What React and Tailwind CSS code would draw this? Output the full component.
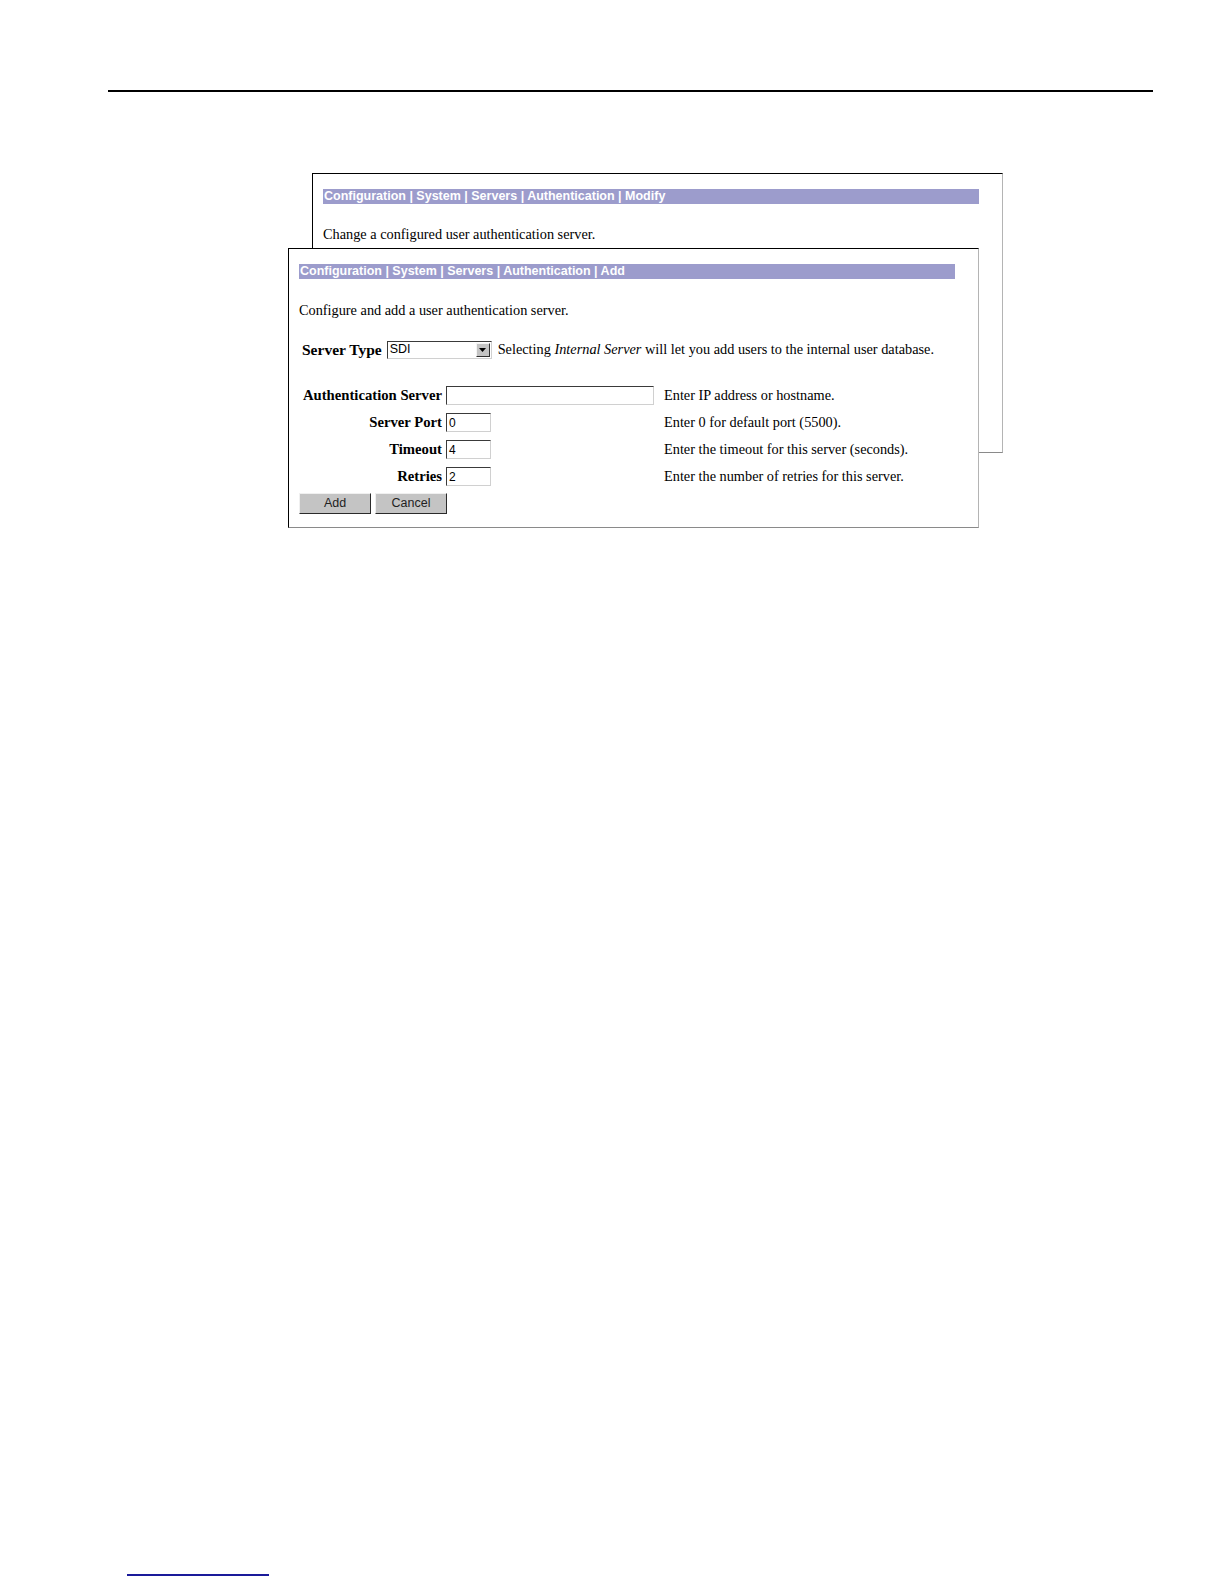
import React from 'react';

const serif = "font-['Liberation_Serif','Times_New_Roman',serif]";
const sans = "font-['Liberation_Sans',Arial,sans-serif]";

function Header({ title }) {
  return (
    <div className={`ml-[10px] mt-[15px] h-[15px] w-[656px] bg-[#9c9ccc] pl-[1px] text-[12.5px] font-bold leading-[15px] text-white ${sans}`}>
      {title}
    </div>
  );
}

function Field({ value, width }) {
  return (
    <div
      className={`flex h-[19px] items-center border border-t-[#3a3a3a] border-l-[#3a3a3a] border-r-[#d0d0d0] border-b-[#d0d0d0] bg-white pl-[2px] text-[12px] text-black ${sans} ${width}`}>
      {value}
    </div>
  );
}

function Button({ label }) {
  return (
    <div
      className={`flex h-[21px] w-[72px] items-center justify-center border border-t-[#f0f0f0] border-l-[#f0f0f0] border-r-[#2a2a2a] border-b-[#2a2a2a] bg-[#c4c4c4] text-[12.5px] text-[#222] ${sans}`}>
      {label}
    </div>
  );
}

const rows = [
  { label: 'Authentication Server', value: '', width: 'w-[212px]', help: 'Enter IP address or hostname.' },
  { label: 'Server Port', value: '0', width: 'w-[45px]', help: 'Enter 0 for default port (5500).' },
  { label: 'Timeout', value: '4', width: 'w-[45px]', help: 'Enter the timeout for this server (seconds).' },
  { label: 'Retries', value: '2', width: 'w-[45px]', help: 'Enter the number of retries for this server.' },
];

export default function App() {
  return (
    <div className={`relative h-[1584px] w-[1224px] bg-white ${serif}`}>
      <div className="pl-[108px] pt-[90px]">
        <div className="h-[2px] w-[1045px] bg-black" />
      </div>

      {/* window behind */}
      <div className="absolute left-[312px] top-[173px] h-[280px] w-[691px] border border-t-black border-l-black border-r-[#b4b4b4] border-b-[#8a8a8a] bg-white">
        <Header title="Configuration | System | Servers | Authentication | Modify" />
        <p className="ml-[10px] mt-[22px] text-[14.3px] leading-[16px] text-black">
          Change a configured user authentication server.
        </p>
      </div>

      {/* window in front */}
      <div className="absolute left-[288px] top-[248px] h-[280px] w-[691px] border border-t-black border-l-black border-r-[#b4b4b4] border-b-[#8a8a8a] bg-white">
        <Header title="Configuration | System | Servers | Authentication | Add" />
        <div className="pl-[10px] text-[14.3px] text-black">
          <p className="mt-[23px] leading-[16px]">Configure and add a user authentication server.</p>

          <div className="ml-[3px] mt-[22px] flex h-[19px] items-center">
            <span className="whitespace-nowrap text-[15.5px] font-bold">Server Type</span>
            <div className="ml-[5px] flex h-[18px] w-[105px] items-center justify-between border border-t-[#3a3a3a] border-l-[#3a3a3a] border-r-[#d0d0d0] border-b-[#d0d0d0] bg-white">
              <span className={`pl-[2px] text-[12.5px] ${sans}`}>SDI</span>
              <div className="mr-px flex h-[14px] w-[14px] items-center justify-center border border-t-[#f4f4f4] border-l-[#f4f4f4] border-r-[#303030] border-b-[#303030] bg-[#c4c4c4]">
                <svg width="7" height="4" viewBox="0 0 7 4">
                  <path d="M0 0h7L3.5 4z" fill="#000" />
                </svg>
              </div>
            </div>
            <span className="ml-[6px] whitespace-nowrap">
              Selecting <i>Internal Server</i> will let you add users to the internal user database.
            </span>
          </div>

          <div className="mt-[23px] grid grid-cols-[143px_212px_auto]">
            {rows.map((r) => (
              <React.Fragment key={r.label}>
                <div className="flex h-[27px] items-center justify-end whitespace-nowrap text-[14.7px] font-bold">
                  {r.label}
                </div>
                <div className="flex h-[27px] items-center pl-[4px]">
                  <Field value={r.value} width={r.width} />
                </div>
                <div className="flex h-[27px] items-center whitespace-nowrap pl-[10px]">{r.help}</div>
              </React.Fragment>
            ))}
          </div>

          <div className="mt-[3px] flex gap-[4px]">
            <Button label="Add" />
            <Button label="Cancel" />
          </div>
        </div>
      </div>

      <div className="absolute left-[127px] top-[1574px] h-[2px] w-[142px] bg-[#1a1a9a]" />
    </div>
  );
}
